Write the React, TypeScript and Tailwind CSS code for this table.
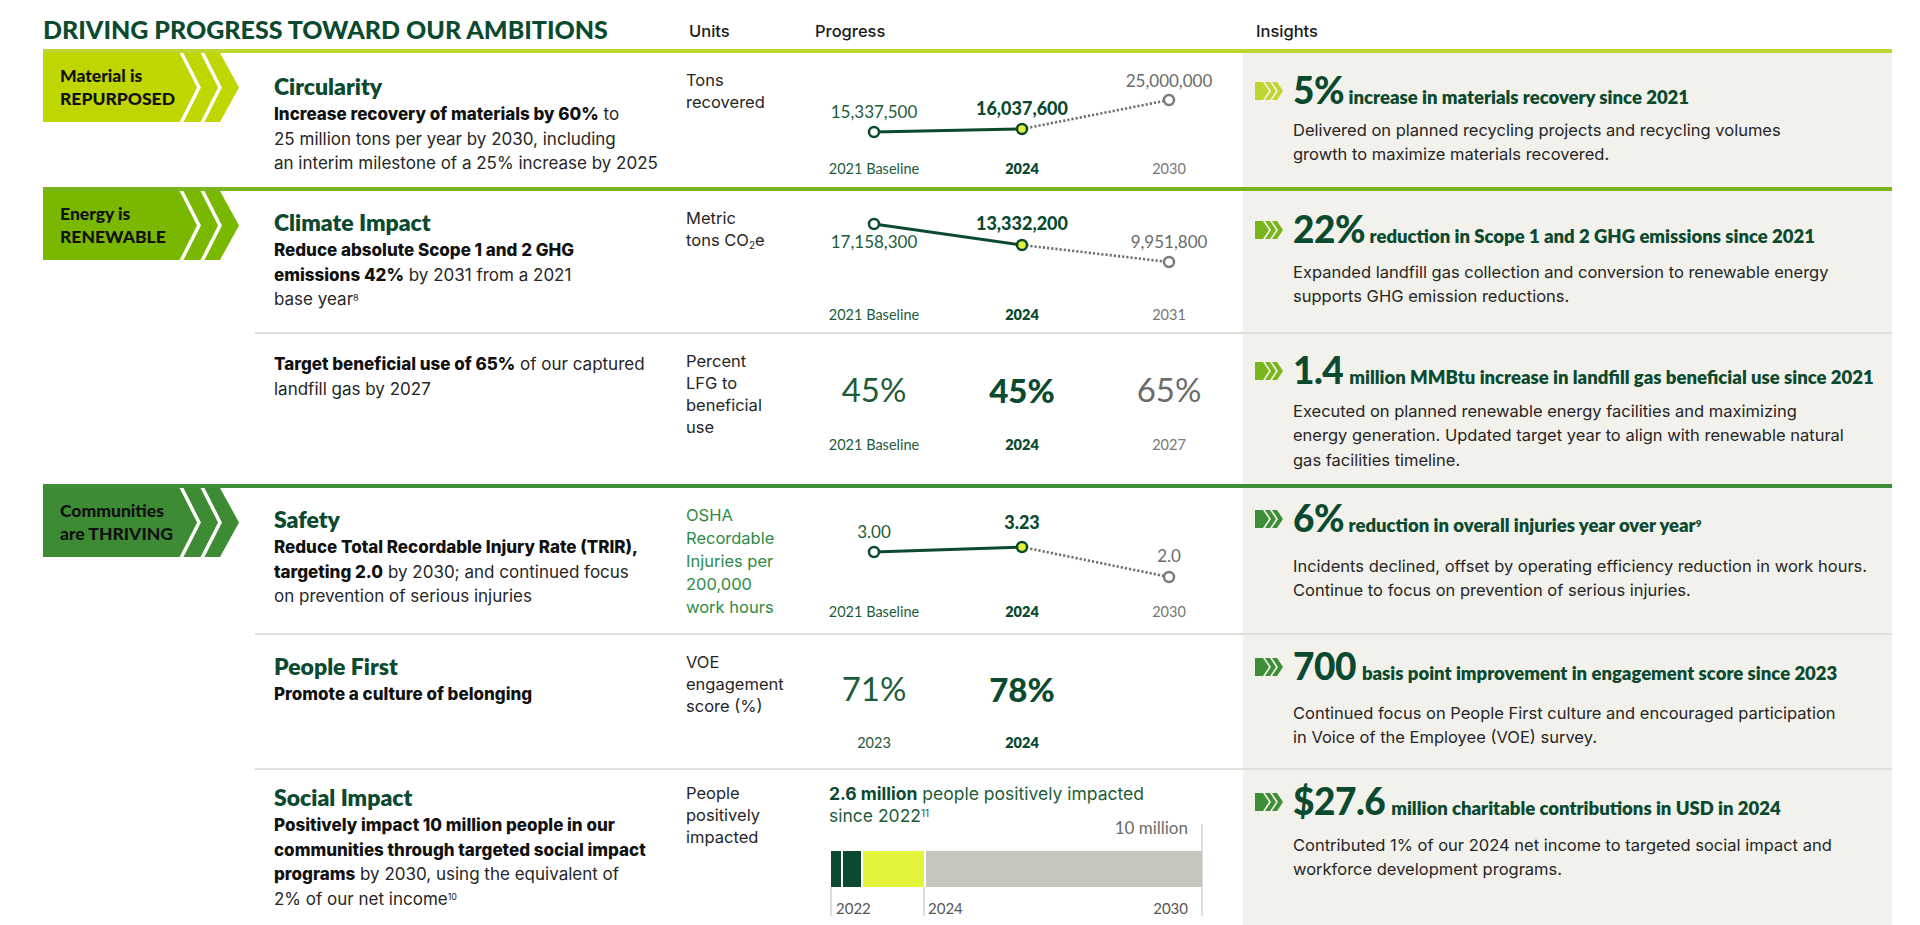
import React from 'react';

// Sustainability progress table: category badges, targets, charts, insights.

const XS = [59, 207, 354];

function Badge({ color, lines }: { color: string; lines: [string, string] }) {
  return (
    <div className="relative h-[69px] w-[196px]">
      <svg className="absolute inset-0" width="196" height="69" viewBox="0 0 196 69">
        <polygon points="0,0 177,0 196,34.5 177,69 0,69" fill={color} />
        <polyline points="137,-3 156,34.5 137,72" fill="none" stroke="#fff" strokeWidth="3.5" />
        <polyline points="158,-3 177,34.5 158,72" fill="none" stroke="#fff" strokeWidth="3.5" />
      </svg>
      <div className="relative pl-[17px] pt-[11px] font-['Lato',sans-serif] text-[17.5px] font-black leading-[23px] text-[#111]">
        <div>{lines[0]}</div>
        <div>{lines[1]}</div>
      </div>
    </div>
  );
}

function Chev({ color }: { color: string }) {
  return (
    <svg width="28" height="20" viewBox="0 0 28 20" className="shrink-0">
      <polygon points="0,1 8,1 14,10 8,19 0,19" fill={color} />
      <polygon points="10,1 15,1 21,10 15,19 10,19 16,10" fill={color} />
      <polygon points="17,1 22,1 28,10 22,19 17,19 23,10" fill={color} />
    </svg>
  );
}

function Insight({
  color,
  big,
  head,
  body,
  pt = 'pt-[18px]',
  mt = 'mt-[5px]',
}: {
  color: string;
  big: string;
  head: React.ReactNode;
  body: React.ReactNode;
  pt?: string;
  mt?: string;
}) {
  const pct = big.endsWith('%');
  return (
    <div className={pt}>
      <div className="flex items-center">
        <Chev color={color} />
        <div className="ml-[10px] flex items-baseline whitespace-nowrap font-['Lato',sans-serif] text-[#0b4a2f]">
          <span className="text-[37px] font-black leading-[40px] tracking-[-0.5px]">
            {pct ? big.slice(0, -1) : big}
            {pct && <span className="tracking-[-2px]">%</span>}
          </span>
          <span className="ml-[6px] text-[18.5px] font-extrabold">{head}</span>
        </div>
      </div>
      <p className={`${mt} pl-[38px] text-[16.5px] leading-[24.5px] text-[#262626]`}>{body}</p>
    </div>
  );
}

function LineChart({
  h,
  py,
  ly,
  labels,
  years,
  yy,
}: {
  h: number;
  py: number[];
  ly: number[];
  labels: string[];
  years: string[];
  yy: number;
}) {
  return (
    <svg width="428" height={h} className="block font-['Lato',sans-serif]">
      <line x1={XS[0]} y1={py[0]} x2={XS[1]} y2={py[1]} stroke="#0b4a2f" strokeWidth="3" />
      <line
        x1={XS[1]}
        y1={py[1]}
        x2={XS[2]}
        y2={py[2]}
        stroke="#6f6f6f"
        strokeWidth="2.6"
        strokeDasharray="2.2 2"
      />
      <circle cx={XS[0]} cy={py[0]} r="5" fill="#fff" stroke="#0b4a2f" strokeWidth="2.5" />
      <circle cx={XS[1]} cy={py[1]} r="5" fill="#e4ef3a" stroke="#0b4a2f" strokeWidth="2.5" />
      <circle cx={XS[2]} cy={py[2]} r="5" fill="#fff" stroke="#7a7a7a" strokeWidth="2.5" />
      <text x={XS[0]} y={ly[0]} textAnchor="middle" dominantBaseline="middle" fontSize="17" fill="#1d5c3a">
        {labels[0]}
      </text>
      <text
        x={XS[1]}
        y={ly[1]}
        textAnchor="middle"
        dominantBaseline="middle"
        fontSize="18"
        fontWeight="900"
        fill="#0b4a2f"
      >
        {labels[1]}
      </text>
      <text x={XS[2]} y={ly[2]} textAnchor="middle" dominantBaseline="middle" fontSize="17" fill="#6b6b6b">
        {labels[2]}
      </text>
      <YearLabels years={years} yy={yy} />
    </svg>
  );
}

function YearLabels({ years, yy }: { years: string[]; yy: number }) {
  const fills = ['#1d5c3a', '#0b4a2f', '#777'];
  return (
    <>
      {years.map((y, i) => (
        <text
          key={i}
          x={XS[i]}
          y={yy}
          textAnchor="middle"
          dominantBaseline="middle"
          fontSize="14.5"
          fontWeight={i === 1 ? 800 : 400}
          fill={fills[i]}
        >
          {y}
        </text>
      ))}
    </>
  );
}

function BigChart({ h, vals, years, vy, yy }: { h: number; vals: string[]; years: string[]; vy: number; yy: number }) {
  const fills = ['#1d5c3a', '#0b4a2f', '#6b6b6b'];
  return (
    <svg width="428" height={h} className="block font-['Lato',sans-serif]">
      {vals.map((v, i) => (
        <text
          key={i}
          x={XS[i]}
          y={vy}
          textAnchor="middle"
          dominantBaseline="middle"
          fontSize="33"
          fontWeight={i === 1 ? 900 : 400}
          fill={fills[i]}
        >
          {v}
        </text>
      ))}
      <YearLabels years={years} yy={yy} />
    </svg>
  );
}

function SocialChart() {
  return (
    <div>
      <p className="pl-[14px] pt-[13px] text-[17.5px] leading-[22px] text-[#1d5c3a]">
        <b className="font-bold text-[#0b4a2f]">2.6 million</b> people positively impacted
        <br />
        since 2022<sup className="text-[10px]">11</sup>
      </p>
      <svg width="428" height="96" className="-mt-[6px] block font-['Lato',sans-serif]">
        <text x="373" y="9" textAnchor="end" dominantBaseline="middle" fontSize="17" fill="#6b6b6b">
          10 million
        </text>
        <line x1="387" y1="3" x2="387" y2="95" stroke="#bdbdb5" strokeWidth="1" />
        <line x1="16" y1="66" x2="16" y2="95" stroke="#bdbdb5" strokeWidth="1" />
        <line x1="109" y1="66" x2="109" y2="95" stroke="#bdbdb5" strokeWidth="1" />
        <rect x="16" y="30" width="10" height="36" fill="#0b4a2f" />
        <rect x="28" y="30" width="18" height="36" fill="#0b4a2f" />
        <rect x="48" y="30" width="61" height="36" fill="#e4f43a" />
        <rect x="111" y="30" width="276" height="36" fill="#c6c6bc" />
        <text x="21" y="89" dominantBaseline="middle" fontSize="15" fill="#555">
          2022
        </text>
        <text x="113" y="89" dominantBaseline="middle" fontSize="15" fill="#555">
          2024
        </text>
        <text x="373" y="89" textAnchor="end" dominantBaseline="middle" fontSize="15" fill="#555">
          2030
        </text>
      </svg>
    </div>
  );
}

function Row({
  h,
  sep,
  desc,
  units,
  progress,
  insight,
}: {
  h: string;
  sep?: boolean;
  desc: React.ReactNode;
  units: React.ReactNode;
  progress: React.ReactNode;
  insight: React.ReactNode;
}) {
  return (
    <div className={`grid grid-cols-[431px_129px_428px_649px] ${h} ${sep ? 'border-t-2 border-[#e0e0da]' : ''}`}>
      <div className="pl-[19px]">{desc}</div>
      <div className="pt-[16px] text-[16.5px] leading-[22px] text-[#262626]">{units}</div>
      <div>{progress}</div>
      <div className="bg-[#f2f1eb] pl-[12px]">{insight}</div>
    </div>
  );
}

function Desc({ title, children, pt = 'pt-[18px]' }: { title?: string; children: React.ReactNode; pt?: string }) {
  return (
    <div className={pt}>
      {title && (
        <div className="mb-[2px] font-['Lato',sans-serif] text-[23px] font-extrabold leading-[28px] text-[#0b4a2f]">
          {title}
        </div>
      )}
      <p className="text-[17px] leading-[24.5px] text-[#262626]">{children}</p>
    </div>
  );
}

const B = ({ children }: { children: React.ReactNode }) => (
  <b className="font-extrabold text-[#111]">{children}</b>
);

export default function App() {
  return (
    <div className="h-[925px] w-[1920px] overflow-hidden bg-white pl-[43px] font-['Inter',sans-serif]">
      {/* header */}
      <div className="flex h-[49px]">
        <div className="w-[643px] pt-[14px] font-['Lato',sans-serif] text-[25px] font-black leading-[30px] text-[#0b4a2f]">
          DRIVING PROGRESS TOWARD OUR AMBITIONS
        </div>
        <div className="w-[129px] pl-[3px] pt-[19px] text-[16.5px] font-medium leading-[24px] text-[#1a1a1a]">Units</div>
        <div className="w-[428px] pt-[19px] text-[16.5px] font-medium leading-[24px] text-[#1a1a1a]">Progress</div>
        <div className="pl-[13px] pt-[19px] text-[16.5px] font-medium leading-[24px] text-[#1a1a1a]">Insights</div>
      </div>

      {/* Material */}
      <section className="flex w-[1849px] border-t-4 border-[#bfd630]">
        <div className="w-[212px] shrink-0">
          <Badge color="#bfd600" lines={['Material is', 'REPURPOSED']} />
        </div>
        <div className="flex flex-col">
          <Row
            h="h-[134px]"
            desc={
              <Desc title="Circularity" pt="pt-[19px]">
                <B>Increase recovery of materials by 60%</B> to
                <br />
                25 million tons per year by 2030, including
                <br />
                an interim milestone of a 25% increase by 2025
              </Desc>
            }
            units={
              <>
                Tons
                <br />
                recovered
              </>
            }
            progress={
              <LineChart
                h={134}
                py={[79, 76, 47]}
                ly={[61, 57, 30]}
                labels={['15,337,500', '16,037,600', '25,000,000']}
                years={['2021 Baseline', '2024', '2030']}
                yy={117}
              />
            }
            insight={
              <Insight
                color="#bfd630"
                big="5%"
                head="increase in materials recovery since 2021"
                pt="pt-[17px]"
                mt="mt-[6px]"
                body={
                  <>
                    Delivered on planned recycling projects and recycling volumes
                    <br />
                    growth to maximize materials recovered.
                  </>
                }
              />
            }
          />
        </div>
      </section>

      {/* Energy */}
      <section className="flex w-[1849px] border-t-4 border-[#7ab51d]">
        <div className="w-[212px] shrink-0">
          <Badge color="#7ab800" lines={['Energy is', 'RENEWABLE']} />
        </div>
        <div className="flex flex-col">
          <Row
            h="h-[141px]"
            desc={
              <Desc title="Climate Impact" pt="pt-[17px]">
                <B>Reduce absolute Scope 1 and 2 GHG</B>
                <br />
                <B>emissions 42%</B> by 2031 from a 2021
                <br />
                base year<sup className="text-[9px]">8</sup>
              </Desc>
            }
            units={
              <>
                Metric
                <br />
                tons CO<sub className="text-[10px]">2</sub>e
              </>
            }
            progress={
              <LineChart
                h={141}
                py={[33, 54, 71]}
                ly={[53, 34, 53]}
                labels={['17,158,300', '13,332,200', '9,951,800']}
                years={['2021 Baseline', '2024', '2031']}
                yy={125}
              />
            }
            insight={
              <Insight
                color="#7ab51d"
                big="22%"
                head="reduction in Scope 1 and 2 GHG emissions since 2021"
                pt="pt-[18px]"
                mt="mt-[9px]"
                body={
                  <>
                    Expanded landfill gas collection and conversion to renewable energy
                    <br />
                    supports GHG emission reductions.
                  </>
                }
              />
            }
          />
          <Row
            h="h-[152px]"
            sep
            desc={
              <Desc pt="pt-[18px]">
                <B>Target beneficial use of 65%</B> of our captured
                <br />
                landfill gas by 2027
              </Desc>
            }
            units={
              <>
                Percent
                <br />
                LFG to
                <br />
                beneficial
                <br />
                use
              </>
            }
            progress={
              <BigChart
                h={150}
                vals={['45%', '45%', '65%']}
                years={['2021 Baseline', '2024', '2027']}
                vy={60}
                yy={112}
              />
            }
            insight={
              <Insight
                color="#7ab51d"
                big="1.4"
                head="million MMBtu increase in landfill gas beneficial use since 2021"
                pt="pt-[16px]"
                mt="mt-[7px]"
                body={
                  <>
                    Executed on planned renewable energy facilities and maximizing
                    <br />
                    energy generation. Updated target year to align with renewable natural
                    <br />
                    gas facilities timeline.
                  </>
                }
              />
            }
          />
        </div>
      </section>

      {/* Communities */}
      <section className="flex w-[1849px] border-t-4 border-[#3e8e37]">
        <div className="w-[212px] shrink-0">
          <Badge color="#3d8b35" lines={['Communities', 'are THRIVING']} />
        </div>
        <div className="flex flex-col">
          <Row
            h="h-[145px]"
            desc={
              <Desc title="Safety" pt="pt-[17px]">
                <B>Reduce Total Recordable Injury Rate (TRIR),</B>
                <br />
                <B>targeting 2.0</B> by 2030; and continued focus
                <br />
                on prevention of serious injuries
              </Desc>
            }
            units={
              <div className="leading-[23px] text-[#2e8b46]">
                OSHA
                <br />
                Recordable
                <br />
                Injuries per
                <br />
                200,000
                <br />
                work hours
              </div>
            }
            progress={
              <LineChart
                h={145}
                py={[64, 59, 89]}
                ly={[46, 36, 70]}
                labels={['3.00', '3.23', '2.0']}
                years={['2021 Baseline', '2024', '2030']}
                yy={125}
              />
            }
            insight={
              <Insight
                color="#3e8e37"
                big="6%"
                head={
                  <>
                    reduction in overall injuries year over year<sup className="text-[10px]">9</sup>
                  </>
                }
                pt="pt-[10px]"
                mt="mt-[14px]"
                body={
                  <>
                    Incidents declined, offset by operating efficiency reduction in work hours.
                    <br />
                    Continue to focus on prevention of serious injuries.
                  </>
                }
              />
            }
          />
          <Row
            h="h-[135px]"
            sep
            desc={
              <Desc title="People First" pt="pt-[17px]">
                <B>Promote a culture of belonging</B>
              </Desc>
            }
            units={
              <>
                VOE
                <br />
                engagement
                <br />
                score (%)
              </>
            }
            progress={<BigChart h={133} vals={['71%', '78%']} years={['2023', '2024']} vy={58} yy={109} />}
            insight={
              <Insight
                color="#3e8e37"
                big="700"
                head="basis point improvement in engagement score since 2023"
                pt="pt-[11px]"
                mt="mt-[13px]"
                body={
                  <>
                    Continued focus on People First culture and encouraged participation
                    <br />
                    in Voice of the Employee (VOE) survey.
                  </>
                }
              />
            }
          />
          <Row
            h="h-[160px]"
            sep
            desc={
              <Desc title="Social Impact" pt="pt-[13px]">
                <B>Positively impact 10 million people in our</B>
                <br />
                <B>communities through targeted social impact</B>
                <br />
                <B>programs</B> by 2030, using the equivalent of
                <br />
                2% of our net income<sup className="text-[9px]">10</sup>
              </Desc>
            }
            units={
              <div className="-mt-[4px]">
                People
                <br />
                positively
                <br />
                impacted
              </div>
            }
            progress={<SocialChart />}
            insight={
              <Insight
                color="#3e8e37"
                big="$27.6"
                head="million charitable contributions in USD in 2024"
                pt="pt-[11px]"
                mt="mt-[10px]"
                body={
                  <>
                    Contributed 1% of our 2024 net income to targeted social impact and
                    <br />
                    workforce development programs.
                  </>
                }
              />
            }
          />
        </div>
      </section>
    </div>
  );
}
